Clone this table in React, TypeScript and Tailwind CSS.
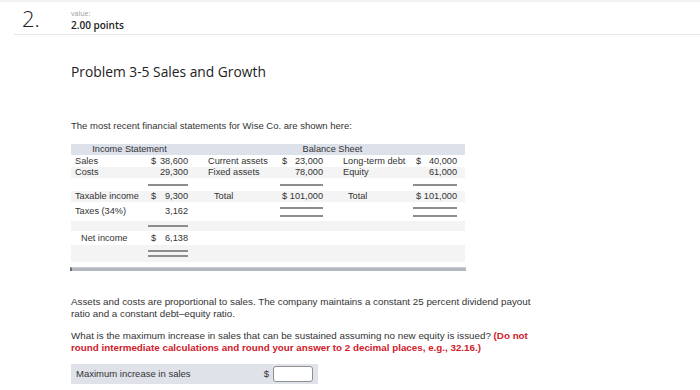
import React from "react";

const cols = "grid grid-cols-[77px_40px_92px_43px_90px_44px_8px] items-center";

function Line() {
  return <div className="h-[2px] bg-[#8d8d8d]" />;
}

function Val({ d, n, pl = "pl-[3px]" }: { d?: string; n: string; pl?: string }) {
  return (
    <div className={`flex justify-between whitespace-nowrap ${pl}`}>
      <span>{d ?? ""}</span>
      <span>{n}</span>
    </div>
  );
}

export default function App() {
  const gray = "bg-[#f4f4f4]";
  return (
    <div
      className="w-[700px] h-[390px] bg-white overflow-hidden text-[#333]"
      style={{ fontFamily: '"Liberation Sans", Arial, sans-serif' }}
    >
      <div className="h-[2px] bg-[#f2f2f2]" />
      <div
        className="flex h-[33px] ml-[14px] border-b border-[#e8e8e8]"
        style={{ fontFamily: '"Open Sans", sans-serif' }}
      >
        <div className="ml-[8px] w-[49px] pt-[5px] text-[22px] leading-[22px] font-light text-[#222]">2.</div>
        <div className="flex flex-col pt-[8px]">
          <div className="text-[7px] leading-[8px] text-[#999]">value:</div>
          <div className="mt-[1px] text-[10px] leading-[12px] font-semibold text-[#222]">2.00 points</div>
        </div>
      </div>

      <div className="pl-[71px]">
        <div
          className="mt-[29px] text-[13.8px] leading-[16px] font-medium text-[#222]"
          style={{ fontFamily: '"Open Sans", sans-serif' }}
        >
          Problem 3-5 Sales and Growth
        </div>

        <div className="mt-[40px] text-[9.5px] leading-[12px] whitespace-nowrap">
          The most recent financial statements for Wise Co. are shown here:
        </div>

        <div className="mt-[12px] w-[394px] text-[9.2px] leading-[11px] whitespace-nowrap">
          <div className="flex h-[11px] items-center bg-[#dde1ea]">
            <div className="w-[117px] text-center">Income Statement</div>
            <div className="w-[20px]" />
            <div className="w-[249px] text-center">Balance Sheet</div>
          </div>
          <div className={`${cols} h-[12px]`}>
            <div className="pl-[4px]">Sales</div>
            <Val d="$" n="38,600" />
            <div className="pl-[20px]">Current assets</div>
            <Val d="$" n="23,000" pl="pl-[2px]" />
            <div className="pl-[20px]">Long-term debt</div>
            <Val d="$" n="40,000" />
            <div />
          </div>
          <div className={`${cols} h-[11px] ${gray}`}>
            <div className="pl-[4px]">Costs</div>
            <Val n="29,300" />
            <div className="pl-[20px]">Fixed assets</div>
            <Val n="78,000" pl="pl-[2px]" />
            <div className="pl-[20px]">Equity</div>
            <Val n="61,000" />
            <div />
          </div>
          <div className={`${cols} h-[13px]`}>
            <div />
            <Line />
            <div />
            <Line />
            <div />
            <Line />
            <div />
          </div>
          <div className={`${cols} h-[11px] ${gray}`}>
            <div className="pl-[4px]">Taxable income</div>
            <Val d="$" n="9,300" />
            <div className="pl-[26px]">Total</div>
            <Val d="$" n="101,000" pl="pl-[2px]" />
            <div className="pl-[25px]">Total</div>
            <Val d="$" n="101,000" />
            <div />
          </div>
          <div className={`${cols} h-[19px]`}>
            <div className="pl-[4px]">Taxes (34%)</div>
            <Val n="3,162" />
            <div />
            <div className="flex flex-col gap-[6px]">
              <Line />
              <Line />
            </div>
            <div />
            <div className="flex flex-col gap-[6px]">
              <Line />
              <Line />
            </div>
            <div />
          </div>
          <div className={`${cols} h-[10px] ${gray}`}>
            <div />
            <Line />
            <div />
            <div />
            <div />
            <div />
            <div />
          </div>
          <div className={`${cols} h-[14px]`}>
            <div className="pl-[10px]">Net income</div>
            <Val d="$" n="6,138" />
            <div />
            <div />
            <div />
            <div />
            <div />
          </div>
          <div className={`${cols} h-[17px] ${gray}`}>
            <div />
            <div className="flex flex-col gap-[3px]">
              <Line />
              <Line />
            </div>
            <div />
            <div />
            <div />
            <div />
            <div />
          </div>
        </div>

        <div className="mt-[5px] w-[396px] -ml-[1px] h-[4px] bg-[#b2b7c0] border-l-2 border-[#6f6f6f] border-t border-t-[#c9ccd2]" />

        <div className="mt-[25px] w-[470px] text-[9.8px] leading-[12px]">
          Assets and costs are proportional to sales. The company maintains a constant 25 percent dividend payout
          ratio and a constant debt–equity ratio.
        </div>

        <div className="mt-[10px] w-[470px] text-[9.8px] leading-[12px]">
          What is the maximum increase in sales that can be sustained assuming no new equity is issued?{" "}
          <span className="font-bold text-[#d0202a]">
            (Do not round intermediate calculations and round your answer to 2 decimal places, e.g., 32.16.)
          </span>
        </div>

        <div className="mt-[10px] w-[247px] h-[20px] bg-[#dfe2e9] flex items-center text-[9.5px]">
          <div className="pl-[5px] flex-1">Maximum increase in sales</div>
          <div className="mr-[4px]">$</div>
          <div className="w-[40px] h-[16px] bg-white border border-[#8f8f8f] rounded-[3px] mr-[5px]" />
        </div>
      </div>
    </div>
  );
}
